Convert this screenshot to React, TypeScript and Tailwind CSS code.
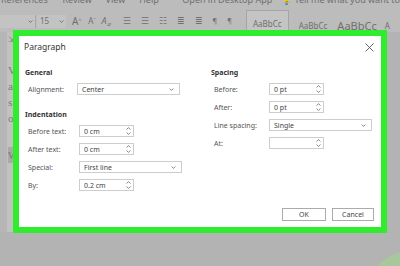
import React from "react";

const ui = { fontFamily: '"Noto Sans", "Open Sans", sans-serif' };

function Chevron() {
  return (
    <svg width="5" height="3" viewBox="0 0 5 3">
      <path d="M0.6 0.5 L2.5 2.4 L4.4 0.5" stroke="#666" fill="none" strokeWidth="0.8" />
    </svg>
  );
}

function Spin() {
  return (
    <div className="flex h-full flex-col justify-between py-[1px]">
      <svg width="5" height="3" viewBox="0 0 5 3">
        <path d="M0.6 2.5 L2.5 0.6 L4.4 2.5" stroke="#666" fill="none" strokeWidth="0.8" />
      </svg>
      <svg width="5" height="3" viewBox="0 0 5 3">
        <path d="M0.6 0.5 L2.5 2.4 L4.4 0.5" stroke="#666" fill="none" strokeWidth="0.8" />
      </svg>
    </div>
  );
}

type FieldProps = { value: string; kind: "select" | "spin"; wide?: boolean };

function Field({ value, kind, wide }: FieldProps) {
  return (
    <div
      className={`flex h-[12px] items-center justify-between border border-[#cdcdcd] bg-white pl-[4px] ${
        kind === "select" ? "pr-[5px]" : "pr-[2px]"
      } ${wide ? "w-[103px]" : "w-[55px]"}`}
    >
      <span className="text-[7px] leading-none text-[#444]">{value}</span>
      {kind === "select" ? <Chevron /> : <Spin />}
    </div>
  );
}

function Row({ label, lw, children }: { label: string; lw: string; children: React.ReactNode }) {
  return (
    <div className="flex h-[12px] items-center">
      <span className={`${lw} pl-[3px] text-[7px] leading-none text-[#555]`}>{label}</span>
      {children}
    </div>
  );
}

function Heading({ children, mt }: { children: React.ReactNode; mt: string }) {
  return (
    <div className={`${mt} flex h-[10px] items-center text-[7px] font-bold leading-none text-[#333]`}>
      {children}
    </div>
  );
}

function Ribbon() {
  return (
    <div className="bg-[#bcbcbc] text-[#6f6f6f]">
      <div className="h-[7px] overflow-hidden">
        <div className="-mt-[6px] flex whitespace-nowrap text-[9px] leading-[11px]">
          <span className="ml-[1px] w-[64px]">References</span>
          <span className="w-[45px]">Review</span>
          <span className="w-[35px]">View</span>
          <span className="w-[45px]">Help</span>
          <span className="w-[103px]">Open in Desktop App</span>
          <span className="w-[14px]">💡</span>
          <span>Tell me what you want to</span>
        </div>
      </div>
      <div className="flex h-[25px] items-center whitespace-nowrap pt-[3px] text-[8px]">
        <div className="flex h-[13px] w-[36px] items-center justify-end border-r border-[#a8a8a8] bg-[#c3c3c3] pr-[2px]">
          <Chevron />
        </div>
        <div className="ml-[1px] flex h-[13px] w-[29px] items-center justify-between bg-[#c3c3c3] pl-[3px] pr-[2px]">
          <span>15</span>
          <Chevron />
        </div>
        <span className="ml-[6px] text-[10px]">A<sup className="text-[5px]">^</sup></span>
        <span className="ml-[7px] text-[8px]">A<sup className="text-[5px]">ˇ</sup></span>
        <span className="ml-[6px] text-[9px] italic">A<sub className="text-[6px]">⌀</sub></span>
        <div className="ml-[12px] flex items-center gap-[10px]">
          <span className="text-[9px]">☰</span>
          <span className="text-[9px]">☰</span>
          <span className="text-[9px]">☷</span>
          <span className="text-[9px]">≣</span>
          <span className="text-[9px]">≣</span>
          <span className="text-[7px]">¶</span>
          <span className="text-[7px]">¶</span>
        </div>
        <div className="ml-[14px] flex h-[22px] w-[43px] items-end justify-center self-end border border-[#a5a5a5] bg-[#c4c4c4] pb-[1px] text-[8px]">
          AaBbCc
        </div>
        <span className="ml-[10px] self-end text-[8px]">AaBbCc</span>
        <span className="ml-[10px] self-end text-[11px] leading-[12px]">AaBbCc</span>
        <span className="ml-[8px] self-end text-[8px]">A</span>
      </div>
    </div>
  );
}

export default function App() {
  return (
    <div className="relative h-[266px] w-[400px] overflow-hidden bg-[#b3b3b3]" style={ui}>
      <Ribbon />
      <div className="flex">
        <div className="h-[200px] w-[7px] bg-[#b6b6b6]" />
        <div className="flex h-[200px] w-[10px] flex-col bg-[#c2c2c2] pl-[1px] pt-[2px] font-serif text-[11px] leading-[16px] text-[#7a7a7a]" style={{ fontFamily: '"Liberation Serif", serif' }}>
          <span className="text-[8px] leading-[12px]">⇲</span>
          <span className="mt-[16px]">V</span>
          <span>a</span>
          <span>s</span>
          <span>o</span>
          <span className="mt-[21px] bg-[#a9a9a9]">W</span>
        </div>
      </div>

      <div className="absolute bottom-[-40px] right-[-40px] h-[54px] w-[72px] rounded-tl-[40px] bg-[#a9c79c]" />

      <div className="absolute left-[13px] top-[30px] flex h-[203px] w-[374px] flex-col border-[6px] border-[#2fec2f] bg-white">
        <div className="flex h-[22px] items-center justify-between pl-[5px] pr-[7px]">
          <span className="text-[8.5px] leading-none text-[#333]">Paragraph</span>
          <svg width="9" height="9" viewBox="0 0 9 9">
            <path d="M0.5 0.5 L8.5 8.5 M8.5 0.5 L0.5 8.5" stroke="#555" strokeWidth="0.9" />
          </svg>
        </div>
        <div className="flex">
          <div className="flex w-[192px] flex-col gap-[6px] pl-[6px]">
            <Heading mt="mt-[9px]">General</Heading>
            <div className="flex h-[12px] items-center">
              <span className="w-[52px] pl-[3px] text-[7px] leading-none text-[#555]">Alignment:</span>
              <Field value="Center" kind="select" wide />
            </div>
            <Heading mt="mt-[8px]">Indentation</Heading>
            <Row label="Before text:" lw="w-[54px]">
              <Field value="0 cm" kind="spin" />
            </Row>
            <Row label="After text:" lw="w-[54px]">
              <Field value="0 cm" kind="spin" />
            </Row>
            <Row label="Special:" lw="w-[54px]">
              <Field value="First line" kind="select" wide />
            </Row>
            <Row label="By:" lw="w-[54px]">
              <Field value="0.2 cm" kind="spin" />
            </Row>
          </div>
          <div className="flex flex-col gap-[6px]">
            <Heading mt="mt-[9px]">Spacing</Heading>
            <Row label="Before:" lw="w-[58px]">
              <Field value="0 pt" kind="spin" />
            </Row>
            <Row label="After:" lw="w-[58px]">
              <Field value="0 pt" kind="spin" />
            </Row>
            <Row label="Line spacing:" lw="w-[58px]">
              <Field value="Single" kind="select" wide />
            </Row>
            <Row label="At:" lw="w-[58px]">
              <Field value="" kind="spin" />
            </Row>
          </div>
        </div>
        <div className="mt-auto flex justify-end gap-[6px] pb-[6px] pr-[7px]">
          <button className="h-[13px] w-[44px] border border-[#ababab] bg-white text-[7px] leading-none text-[#444]">OK</button>
          <button className="h-[13px] w-[42px] border border-[#ababab] bg-white text-[7px] leading-none text-[#444]">Cancel</button>
        </div>
      </div>
    </div>
  );
}
